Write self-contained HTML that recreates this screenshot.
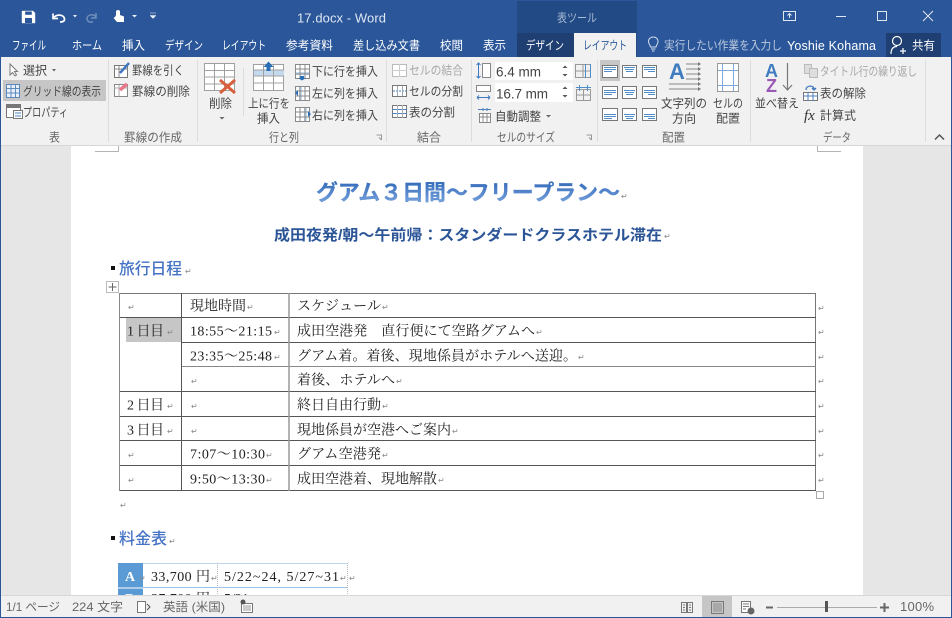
<!DOCTYPE html>
<html lang="ja"><head><meta charset="utf-8"><title>17.docx - Word</title>
<style>html,body{margin:0;padding:0;background:#fff}svg{display:block}
text{font-family:"Liberation Sans","Noto Sans CJK JP",sans-serif;font-size:12px;fill:#444}
.w text{fill:#fff}.g text{fill:#666}.d text{fill:#a8a8a8}
.s text{font-family:"Liberation Serif","Noto Serif CJK SC",serif;font-size:14px;fill:#222}
.m text{font-size:8px;fill:#888;font-family:"DejaVu Sans",sans-serif}
</style></head><body>
<svg xmlns="http://www.w3.org/2000/svg" width="952" height="618" viewBox="0 0 952 618">
<defs><linearGradient id="tg" x1="0" y1="0" x2="0" y2="1"><stop offset="0" stop-color="#2e66b5"/><stop offset="1" stop-color="#7ea8e2"/></linearGradient></defs>
<rect width="952" height="618" fill="#e6e6e6"/>
<!-- document -->
<rect x="71" y="146" width="792" height="450" fill="#fff"/>
<path d="M95 151.500H118.500V146M817.500 146V151.500H841" fill="none" stroke="#b5b5b5"/>
<text x="316" y="200" textLength="304" lengthAdjust="spacingAndGlyphs" style="font-size:21.500px;font-weight:700;fill:url(#tg);stroke:#3a72c0;stroke-width:.2">グアム３日間～フリープラン～</text>
<text x="274" y="240" textLength="388" lengthAdjust="spacingAndGlyphs" style="font-size:15px;font-weight:700;fill:#2b5597">成田夜発/朝～午前帰：スタンダードクラスホテル滞在</text>
<rect x="111" y="266" width="4" height="4" fill="#111"/>
<text x="119" y="274" textLength="63" lengthAdjust="spacingAndGlyphs" style="font-size:15.800px;fill:#4472c4;font-weight:500">旅行日程</text>
<rect x="106.500" y="281.500" width="12" height="11" fill="#fff" stroke="#bbb"/>
<path d="M112.500 283V291M108.500 287H116.500" stroke="#666"/>
<!-- table 1 -->
<rect x="126" y="318" width="55" height="24" fill="#c6c6c6"/>
<g fill="none" stroke="#555">
<path d="M119 293.500H815.500V491" stroke="#777"/>
<path d="M119 317.500H816M119 391.500H816M119 416.500H816M119 440.500H816M119 465.500H816M119 490.500H816"/>
<path d="M181 342.500H816"/>
<path d="M181 366.500H816" stroke="#888"/>
<path d="M119.500 293V491" stroke="#888"/>
<path d="M181.500 293V491"/>
<path d="M289 293V491" stroke="#999" stroke-width="1.500"/>
</g>
<rect x="816.500" y="491.500" width="7" height="7" fill="#fff" stroke="#aaa"/>
<g class="s">
<text x="190" y="310.500" textLength="56">現地時間</text>
<text x="297" y="310.500" textLength="84">スケジュール</text>
<text x="127" y="335.500" textLength="37">1 日目</text>
<text x="190" y="335.500" textLength="82">18:55～21:15</text>
<text x="297" y="335.500" textLength="238">成田空港発　直行便にて空路グアムへ</text>
<text x="190" y="360.500" textLength="82">23:35～25:48</text>
<text x="297" y="360.500" textLength="280">グアム着。着後、現地係員がホテルへ送迎。</text>
<text x="297" y="384.500" textLength="98">着後、ホテルへ</text>
<text x="127" y="409.500" textLength="37">2 日目</text>
<text x="297" y="409.500" textLength="84">終日自由行動</text>
<text x="127" y="434.500" textLength="37">3 日目</text>
<text x="297" y="434.500" textLength="154">現地係員が空港へご案内</text>
<text x="190" y="458.500" textLength="75">7:07～10:30</text>
<text x="297" y="458.500" textLength="84">グアム空港発</text>
<text x="190" y="483.500" textLength="75">9:50～13:30</text>
<text x="297" y="483.500" textLength="140">成田空港着、現地解散</text>
</g>
<g class="m">
<text x="621" y="199">↵</text><text x="664" y="239">↵</text><text x="185" y="274">↵</text>
<text x="128" y="310">↵</text><text x="247" y="310">↵</text><text x="382" y="310">↵</text>
<text x="167" y="335">↵</text><text x="274" y="335">↵</text><text x="536" y="335">↵</text>
<text x="274" y="360">↵</text><text x="578" y="360">↵</text>
<text x="191" y="384">↵</text><text x="396" y="384">↵</text>
<text x="167" y="409">↵</text><text x="191" y="409">↵</text><text x="382" y="409">↵</text>
<text x="167" y="434">↵</text><text x="191" y="434">↵</text><text x="452" y="434">↵</text>
<text x="128" y="458">↵</text><text x="266" y="458">↵</text><text x="382" y="458">↵</text>
<text x="128" y="483">↵</text><text x="266" y="483">↵</text><text x="438" y="483">↵</text>
<text x="818" y="311">↵</text><text x="818" y="335">↵</text><text x="818" y="360">↵</text><text x="818" y="384">↵</text><text x="818" y="409">↵</text><text x="818" y="434">↵</text><text x="818" y="458">↵</text><text x="818" y="483">↵</text>
<text x="120" y="508">↵</text><text x="169" y="544">↵</text>
</g>
<rect x="111" y="536" width="4" height="4" fill="#111"/>
<text x="119" y="544" textLength="48" lengthAdjust="spacingAndGlyphs" style="font-size:15.800px;fill:#4472c4;font-weight:500">料金表</text>
<!-- table 2 -->
<rect x="118" y="563" width="25" height="33" fill="#5b9bd5"/>
<path d="M118 588H143" stroke="#fff"/>
<path d="M143 563.500H347" stroke="#bdd6ee"/>
<path d="M143 587.500H347" stroke="#9dc3e6"/>
<path d="M217.500 563V596M347.500 563V596" stroke="#bbb" stroke-dasharray="1 1"/>
<g class="s">
<text x="125" y="581" style="font-weight:700;fill:#fff">A</text>
<text x="125" y="603" style="font-weight:700;fill:#fff">B</text>
<text x="151" y="581" textLength="59">33,700 円</text>
<text x="224" y="581" textLength="115">5/22~24, 5/27~31</text>
<text x="151" y="603" textLength="59">37,700 円</text>
<text x="224" y="603">5/21</text>
</g>
<g class="m"><text x="139" y="581">↵</text><text x="211" y="581">↵</text><text x="340" y="581">↵</text><text x="349" y="581">↵</text></g>
<!-- title bar -->
<rect width="952" height="57" fill="#2b579a"/>
<rect x="517" y="1" width="120" height="56" fill="#224a85"/>
<rect x="517" y="33" width="57" height="24" fill="#1f3f72"/>
<rect x="574" y="33" width="62" height="24" fill="#f1f1f1"/>
<rect x="886" y="33" width="55" height="24" fill="#1f3f72"/>
<path d="M22 11H33L35 13V23H22ZM25 11.500V15H32V11.500M25 23V19H32V23" fill="#fff" stroke="#fff" stroke-width=".4"/>
<rect x="26" y="12" width="5" height="2.500" fill="#2b579a"/><rect x="25" y="18" width="7" height="5" fill="#2b579a"/>
<path d="M53 13.500V18.500H58M53.500 18C56 14 64 14 64.500 19C64.800 21.500 62 22 60 22" fill="none" stroke="#fff" stroke-width="1.700"/>
<path d="M73 15H77L75 17.500Z" fill="#e8eef6"/>
<path d="M96 13V18H91M96 17C93 13 87 15 87 18.500C87 22 91 23 93 21.500" fill="none" stroke="#6f8db9" stroke-width="1.500"/>
<path d="M116 15V11.500C116 9.500 120 9.500 120 11.500V15L124 16.500V22H117L113.500 18L115 17" fill="#fff"/>
<path d="M132 15H137L134.500 17.500Z" fill="#e8eef6"/>
<path d="M150 13H156M150 15.500H156L153 18.500Z" fill="#e8eef6" stroke="#e8eef6" stroke-width=".5"/>
<text x="297" y="22.500" textLength="89" style="font-size:13px;fill:#dfe7f2">17.docx - Word</text>
<text x="557" y="22" textLength="40" lengthAdjust="spacingAndGlyphs" style="fill:#a9bcd6">表ツール</text>
<rect x="783.500" y="11.500" width="12" height="9" fill="none" stroke="#dfe7f2"/>
<path d="M789.500 18V13.500M787.500 15.500L789.500 13.500L791.500 15.500" fill="none" stroke="#dfe7f2"/>
<path d="M836 16.500H846" stroke="#dfe7f2"/>
<rect x="877.500" y="11.500" width="9" height="9" fill="none" stroke="#dfe7f2"/>
<path d="M923 11L933 21M933 11L923 21" stroke="#dfe7f2"/>
<g class="w">
<text x="12" y="49.500" textLength="34" lengthAdjust="spacingAndGlyphs">ファイル</text>
<text x="72" y="49.500" textLength="30" lengthAdjust="spacingAndGlyphs">ホーム</text>
<text x="122" y="49.500" textLength="23" lengthAdjust="spacingAndGlyphs">挿入</text>
<text x="165" y="49.500" textLength="38" lengthAdjust="spacingAndGlyphs">デザイン</text>
<text x="222" y="49.500" textLength="44" lengthAdjust="spacingAndGlyphs">レイアウト</text>
<text x="286" y="49.500" textLength="47" lengthAdjust="spacingAndGlyphs">参考資料</text>
<text x="353" y="49.500" textLength="67" lengthAdjust="spacingAndGlyphs">差し込み文書</text>
<text x="440" y="49.500" textLength="23" lengthAdjust="spacingAndGlyphs">校閲</text>
<text x="483" y="49.500" textLength="23" lengthAdjust="spacingAndGlyphs">表示</text>
<text x="526" y="49.500" textLength="38" lengthAdjust="spacingAndGlyphs">デザイン</text>
<text x="787" y="50" textLength="89" style="font-size:12.500px">Yoshie Kohama</text>
<text x="912" y="49.500" textLength="23" lengthAdjust="spacingAndGlyphs">共有</text>
</g>
<text x="583" y="49.500" textLength="44" lengthAdjust="spacingAndGlyphs" style="fill:#2b579a">レイアウト</text>
<path d="M650.500 47C650 44.500 648.500 44 648.500 41.500C648.500 35.500 658 35.500 658 41.500C658 44 656.500 44.500 656 47ZM651 49H655.500M652 51H654.500" fill="none" stroke="#d5dfee"/>
<text x="664" y="49.500" textLength="118" lengthAdjust="spacingAndGlyphs" style="fill:#b9c8dd">実行したい作業を入力し</text>
<circle cx="897" cy="41" r="4.500" fill="none" stroke="#fff" stroke-width="1.200"/>
<path d="M891 54C891 48 894 46.500 897 46.500M900 51H906M903 48V54" fill="none" stroke="#fff" stroke-width="1.200"/>
<!-- ribbon -->
<rect y="57" width="952" height="88" fill="#f1f1f1"/>
<rect y="145" width="952" height="1" fill="#d6d6d6"/>
<path d="M108.500 60V142M197.500 60V142M386.500 60V142M471.500 60V142M597.500 60V142M750.500 60V142M925.500 60V142" stroke="#dcdcdc"/>
<path d="M243.500 68V116" stroke="#dcdcdc"/>
<rect x="3" y="80" width="103" height="21" fill="#c6c6c6"/>
<rect x="600" y="60" width="20" height="21" fill="#c6c6c6"/>
<!-- group 1 icons -->
<path d="M10 64V75L12.500 72.500L15 76L16.500 75L14.500 71.500H17.500Z" fill="#fff" stroke="#777"/>
<path d="M52 69H56L54 71.500Z" fill="#666"/>
<g fill="none" stroke="#5f87c0"><rect x="6.500" y="84.500" width="13" height="13" fill="#e8f0fa"/><path d="M6.500 88.500H19.500M6.500 93H19.500M11 84.500V97.500M15.500 84.500V97.500"/></g>
<rect x="6.500" y="104.500" width="14" height="13" fill="#fff" stroke="#777"/><rect x="7" y="105" width="13" height="3" fill="#777"/><rect x="13.500" y="110.500" width="9" height="8" fill="#fff" stroke="#777"/><path d="M15 113H21M15 116H21" stroke="#4f81bd"/>
<rect x="114.500" y="65.500" width="13" height="12" fill="#fff" stroke="#777"/><path d="M114 69H128M119 66V77" stroke="#888"/><path d="M120 73L129 63" stroke="#3f78bf" stroke-width="2.500"/>
<rect x="114.500" y="84.500" width="13" height="12" fill="#fff" stroke="#888"/><path d="M114 88H128M119 85V96" stroke="#aaa"/><path d="M120 90L127 84" stroke="#e8788a" stroke-width="3.500"/>
<!-- delete -->
<g fill="none" stroke="#a0a0a0"><rect x="204.500" y="63.500" width="30" height="27" fill="#fff"/><path d="M204 70.500H235M204 77H235M204 84H235M214.500 63V91M224.500 63V91"/></g>
<path d="M220 80L235 93M235 80L220 93" stroke="#d9603c" stroke-width="3"/>
<path d="M219.500 117H224.500L222 119.500Z" fill="#666"/>
<!-- insert above -->
<g fill="none" stroke="#a0a0a0"><rect x="253.500" y="64.500" width="30" height="26" fill="#fff"/><rect x="254" y="70" width="30" height="5.500" fill="#c5d9ef" stroke="none"/><path d="M253 70H284M253 76H284M253 83H284M263.500 64V91M273.500 64V91"/></g>
<path d="M268.500 61.500L263.500 67H266.500V71H270.500V67H273.500Z" fill="#2a6fb5"/>
<g fill="none" stroke="#8a8a8a">
<rect x="295.500" y="64.500" width="14" height="14" fill="#fff"/><rect x="296" y="72" width="13" height="3" fill="#c5d9ef" stroke="none"/><path d="M295 69H310M295 74H310M300 64V79M305 64V79"/>
<rect x="295.500" y="86.500" width="14" height="14" fill="#fff"/><rect x="299" y="87" width="3" height="13" fill="#c5d9ef" stroke="none"/><path d="M295 91H310M295 96H310M300 86V101M305 86V101"/>
<rect x="295.500" y="107.500" width="14" height="14" fill="#fff"/><rect x="304" y="108" width="3" height="13" fill="#c5d9ef" stroke="none"/><path d="M295 112H310M295 117H310M300 107V122M305 107V122"/>
</g>
<path d="M300 76H304V78H306L302 80.500L298 78H300ZM295 93L298 90V96ZM311 114L308 111V117Z" fill="#2a6fb5"/>
<!-- merge -->
<rect x="392.500" y="64.500" width="14" height="12" fill="#fff" stroke="#bbb"/><path d="M392 70.500H407M399.500 64V77" stroke="#ccc"/>
<rect x="392.500" y="85.500" width="14" height="11" fill="#fff" stroke="#777"/><path d="M393 91H406" stroke="#3f78bf" stroke-dasharray="2 1"/><path d="M397.500 86V96M402.500 86V96" stroke="#9ab"/>
<rect x="392.500" y="105.500" width="14" height="12" fill="#fff" stroke="#777"/><path d="M392 109.500H407M392 113.500H407" stroke="#4f81bd"/><path d="M397.500 105V118M402.500 105V118" stroke="#aaa"/>
<!-- size -->
<rect x="495" y="62" width="78" height="18" fill="#fff"/><rect x="495" y="83" width="78" height="19" fill="#fff"/>
<g fill="none" stroke="#888"><rect x="482.500" y="63.500" width="8" height="14" fill="#fff"/><rect x="476.500" y="85.500" width="14" height="6" fill="#fff"/></g>
<path d="M478.500 63V78M476.500 65L478.500 63L480.500 65M476.500 76L478.500 78L480.500 76M477 97.500H490M477 97.500L479 95.500M477 97.500L479 99.500M490 97.500L488 95.500M490 97.500L488 99.500" fill="none" stroke="#3f78bf"/>
<path d="M562.500 68L565 65.500L567.500 68ZM562.500 74L565 76.500L567.500 74ZM562.500 89L565 86.500L567.500 89ZM562.500 95L565 97.500L567.500 95Z" fill="#555"/>
<g fill="none" stroke="#999"><rect x="575.500" y="64.500" width="15" height="13"/><path d="M583 64V78M575 71H591"/></g><path d="M585.500 64V78M590.500 64V78" stroke="#4f8dca"/>
<g fill="none" stroke="#999"><rect x="576.500" y="89.500" width="14" height="11"/><path d="M583.500 89V101M576 95H591"/></g><path d="M576 87.500H591M579.500 85V91M587.500 85V91" stroke="#4f8dca"/>
<g fill="none" stroke="#888"><rect x="479.500" y="113.500" width="11" height="9" fill="#fff"/><path d="M479 117H491M483 114V122M487 114V122"/></g><path d="M478 109.500H491M483 108V111M487 108V111" stroke="#4f81bd"/>
<path d="M546 115H551L548.500 117.500Z" fill="#666"/>
<!-- align -->
<g fill="#fff" stroke="#777">
<rect x="602.500" y="65.500" width="15" height="12"/><rect x="622.500" y="65.500" width="14" height="12"/><rect x="642.500" y="65.500" width="14" height="12"/>
<rect x="602.500" y="86.500" width="15" height="12"/><rect x="622.500" y="86.500" width="14" height="12"/><rect x="642.500" y="86.500" width="14" height="12"/>
<rect x="602.500" y="108.500" width="15" height="12"/><rect x="622.500" y="108.500" width="14" height="12"/><rect x="642.500" y="108.500" width="14" height="12"/>
</g>
<g stroke="#4f8dca" fill="none">
<path d="M604 67.500H616M604 69.500H616M604 71.500H612M624 67.500H635M625 69.500H634M626 71.500H633M644 67.500H655M644 69.500H655M648 71.500H655"/>
<path d="M604 90.500H616M604 92.500H616M604 94.500H612M624 90.500H635M625 92.500H634M626 94.500H633M644 90.500H655M644 92.500H655M648 94.500H655"/>
<path d="M604 114.500H616M604 116.500H616M604 118.500H612M624 114.500H635M625 116.500H634M626 118.500H633M644 114.500H655M644 116.500H655M648 118.500H655"/>
</g>
<text x="669" y="79" style="font-size:22px;font-weight:700;fill:#3f7cc0">A</text>
<path d="M686 64H698M686 69H698M686 74H698M686 79H698M669 84H698M669 89H698" stroke="#888"/>
<path d="M698 62L701 64L698 66ZM698 67L701 69L698 71ZM698 72L701 74L698 76ZM698 77L701 79L698 81ZM698 82L701 84L698 86ZM698 87L701 89L698 91Z" fill="#777"/>
<rect x="717.500" y="63.500" width="21" height="28" fill="#fff" stroke="#999"/>
<path d="M722.500 64V91M733.500 64V91M718 70.500H738M718 85.500H738" stroke="#7fa9d8"/>
<!-- data -->
<text x="765" y="77" style="font-size:18px;font-weight:700;fill:#3f7cc0">A</text>
<text x="766" y="92" style="font-size:18px;font-weight:700;fill:#9b59b6">Z</text>
<path d="M787.500 63V90M783 85L787.500 90L792 85" fill="none" stroke="#777" stroke-width="1.200"/>
<g fill="#ddd" stroke="#bbb"><rect x="804.500" y="64.500" width="7" height="9"/><rect x="809.500" y="68.500" width="8" height="9"/></g>
<rect x="803.500" y="92.500" width="14" height="8" fill="#fff" stroke="#777"/><path d="M803 96H818M808 92V101M813 92V101" stroke="#4f81bd"/><path d="M806 90C806 85 814 85 814 89M812 88L814 90L816 88" fill="none" stroke="#3f78bf" stroke-width="1.300"/>
<text x="804" y="120" style="font-family:'Liberation Serif',serif;font-style:italic;font-size:15px;fill:#333">fx</text>
<path d="M935 139.500L939.500 135L944 139.500" fill="none" stroke="#555" stroke-width="1.500"/>
<path d="M376.500 135H381.500V140M379 137.500L381.500 140M586.500 135H591.500V140M589 137.500L591.500 140" fill="none" stroke="#999"/>
<!-- ribbon text -->
<g>
<text x="23" y="74.500" textLength="24" lengthAdjust="spacingAndGlyphs">選択</text>
<text x="23" y="95.500" textLength="78" lengthAdjust="spacingAndGlyphs">グリッド線の表示</text>
<text x="23" y="116.500" textLength="45" lengthAdjust="spacingAndGlyphs">プロパティ</text>
<text x="132" y="74.500" textLength="52" lengthAdjust="spacingAndGlyphs">罫線を引く</text>
<text x="132" y="95.500" textLength="58" lengthAdjust="spacingAndGlyphs">罫線の削除</text>
<text x="209" y="107.500" textLength="23" lengthAdjust="spacingAndGlyphs">削除</text>
<text x="248" y="107.500" textLength="42" lengthAdjust="spacingAndGlyphs">上に行を</text>
<text x="257" y="122.500" textLength="23" lengthAdjust="spacingAndGlyphs">挿入</text>
<text x="312" y="75.500" textLength="66" lengthAdjust="spacingAndGlyphs">下に行を挿入</text>
<text x="312" y="97.500" textLength="66" lengthAdjust="spacingAndGlyphs">左に列を挿入</text>
<text x="312" y="119.500" textLength="66" lengthAdjust="spacingAndGlyphs">右に列を挿入</text>
<text x="409" y="95.500" textLength="54" lengthAdjust="spacingAndGlyphs">セルの分割</text>
<text x="409" y="116.500" textLength="46" lengthAdjust="spacingAndGlyphs">表の分割</text>
<text x="496" y="76.500" textLength="45" style="font-size:13.500px">6.4 mm</text>
<text x="496" y="98.500" textLength="52" style="font-size:13.500px">16.7 mm</text>
<text x="495" y="120.500" textLength="46" lengthAdjust="spacingAndGlyphs">自動調整</text>
<text x="661" y="107.500" textLength="46" lengthAdjust="spacingAndGlyphs">文字列の</text>
<text x="672" y="122.500" textLength="24" lengthAdjust="spacingAndGlyphs">方向</text>
<text x="713" y="107.500" textLength="30" lengthAdjust="spacingAndGlyphs">セルの</text>
<text x="716" y="122.500" textLength="24" lengthAdjust="spacingAndGlyphs">配置</text>
<text x="755" y="107.500" textLength="44" lengthAdjust="spacingAndGlyphs">並べ替え</text>
<text x="820" y="97.500" textLength="46" lengthAdjust="spacingAndGlyphs">表の解除</text>
<text x="820" y="119.500" textLength="36" lengthAdjust="spacingAndGlyphs">計算式</text>
</g>
<g class="d">
<text x="409" y="74.500" textLength="54" lengthAdjust="spacingAndGlyphs">セルの結合</text>
<text x="820" y="75.500" textLength="97" lengthAdjust="spacingAndGlyphs">タイトル行の繰り返し</text>
</g>
<g class="g">
<text x="49" y="141.500" textLength="11" lengthAdjust="spacingAndGlyphs">表</text>
<text x="124" y="141.500" textLength="58" lengthAdjust="spacingAndGlyphs">罫線の作成</text>
<text x="269" y="141.500" textLength="30" lengthAdjust="spacingAndGlyphs">行と列</text>
<text x="417" y="141.500" textLength="24" lengthAdjust="spacingAndGlyphs">結合</text>
<text x="497" y="141.500" textLength="58" lengthAdjust="spacingAndGlyphs">セルのサイズ</text>
<text x="662" y="141.500" textLength="23" lengthAdjust="spacingAndGlyphs">配置</text>
<text x="823" y="141.500" textLength="28" lengthAdjust="spacingAndGlyphs">データ</text>
</g>
<!-- status bar -->
<rect y="595" width="952" height="23" fill="#f1f1f1"/>
<rect y="595" width="952" height="1" fill="#d6d6d6"/>
<rect x="702" y="596" width="30" height="21" fill="#c6c6c6"/>
<g class="g">
<text x="6" y="611" textLength="54" lengthAdjust="spacingAndGlyphs">1/1 ページ</text>
<text x="72" y="611" textLength="51" lengthAdjust="spacingAndGlyphs">224 文字</text>
<text x="163" y="611" textLength="62" lengthAdjust="spacingAndGlyphs">英語 (米国)</text>
<text x="900" y="611" textLength="34" style="font-size:13px">100%</text>
</g>
<rect x="137.500" y="601.500" width="8" height="11" fill="#fff" stroke="#777"/><path d="M147 604L150 607L147 610" fill="none" stroke="#555"/>
<rect x="241.500" y="603.500" width="11" height="9" fill="#fff" stroke="#777"/><circle cx="243" cy="602" r="2.500" fill="#555"/><path d="M243 606H251M243 608H251M243 610H251" stroke="#999"/>
<g fill="none" stroke="#777"><path d="M681.500 602.500H686.500V612.500H681.500ZM687.500 602.500H692.500V612.500H687.500ZM683 605H685M683 607.500H685M683 610H685M689 605H691M689 607.500H691M689 610H691"/>
<rect x="711.500" y="601.500" width="12" height="12"/><rect x="741.500" y="601.500" width="9" height="11" fill="#fff"/><path d="M743 604H749M743 606.500H749M743 609H746"/></g>
<rect x="713" y="603" width="9" height="9" fill="#a8a8a8"/>
<circle cx="751" cy="611" r="3.500" fill="#666"/>
<path d="M766 607.500H773M880 607.500H889M884.500 603V612" stroke="#666" stroke-width="2"/>
<path d="M777 607.500H877" stroke="#aaa"/>
<rect x="825" y="601" width="3" height="11" fill="#555"/>
<!-- window edge -->
<rect y="57" width="1" height="561" fill="#2b579a"/>
<rect x="951" y="57" width="1" height="561" fill="#2b579a"/>
<rect y="617" width="952" height="1" fill="#2b579a"/>
</svg>
</body></html>
